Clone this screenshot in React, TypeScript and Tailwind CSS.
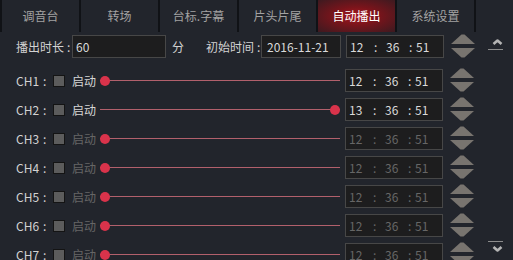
import React from 'react';

const TABS = ['调音台', '转场', '台标.字幕', '片头片尾', '自动播出', '系统设置'];
const ACTIVE = 4;

type Channel = { name: string; enabled: boolean; value: number; hour: string };

const CHANNELS: Channel[] = [
  { name: 'CH1', enabled: true, value: 0, hour: '12' },
  { name: 'CH2', enabled: true, value: 1, hour: '13' },
  { name: 'CH3', enabled: false, value: 0, hour: '12' },
  { name: 'CH4', enabled: false, value: 0, hour: '12' },
  { name: 'CH5', enabled: false, value: 0, hour: '12' },
  { name: 'CH6', enabled: false, value: 0, hour: '12' },
  { name: 'CH7', enabled: false, value: 0, hour: '12' },
];

// ── Spinner (up / down triangles) ────────────────────────────────────────────
function Spinner() {
  return (
    <svg width="24" height="24" viewBox="0 0 24 24" className="ml-[7px] shrink-0 -mt-[1px]">
      <polygon points="10.5,0.5 13.5,0.5 24,10 0,10" fill="#78746f" />
      <polygon points="0,14 24,14 13.5,23.5 10.5,23.5" fill="#78746f" />
    </svg>
  );
}

function TimeBox({ hour, dim }: { hour: string; dim?: boolean }) {
  return (
    <div
      className={`ml-[5px] flex h-[23px] w-[98px] shrink-0 items-center border border-[#474747] bg-[#1d1d1e] pl-[3px] ${
        dim ? 'text-[#666666]' : 'text-[#dadada]'
      }`}
    >
      <span className="w-[24px]">{hour}</span>
      <span className="w-[12px]">:</span>
      <span className="w-[23px]">36</span>
      <span className="w-[7px]">:</span>
      <span>51</span>
    </div>
  );
}

function ScrollArrow({ down }: { down?: boolean }) {
  return (
    <svg width="11" height="6" viewBox="0 0 11 6" className="ml-[4px]">
      <polyline
        points={down ? '1.5,1 5.5,4.5 9.5,1' : '1.5,5 5.5,1.5 9.5,5'}
        fill="none"
        stroke="#b4b4b4"
        strokeWidth="2.6"
        strokeLinejoin="round"
      />
    </svg>
  );
}

export default function App() {
  return (
    <div className="flex h-[260px] w-[513px] flex-col overflow-hidden bg-[#22252c] font-['Noto_Sans_CJK_SC','Noto_Sans',sans-serif] text-[12px] text-[#d2d2d2]">
      {/* Tab bar */}
      <div className="flex h-[32px] shrink-0 border-l-2 border-[#101216]">
        {TABS.map((t, i) => (
          <div
            key={t}
            className={`flex w-[79px] items-center justify-center border-r-2 border-[#101216] pb-[1px] ${
              i === ACTIVE
                ? 'bg-[radial-gradient(ellipse_at_center,#a8161f_0%,#7a141b_40%,#3c1a20_100%)] text-white'
                : 'text-[#a2a2a2]'
            }`}
          >
            {t}
          </div>
        ))}
      </div>

      <div className="flex min-h-0 flex-1">
        {/* Main panel */}
        <div className="flex w-[486px] shrink-0 flex-col pl-[16px]">
          <div className="mt-[3px] flex h-[23px] items-center">
            <span className="w-[56px] whitespace-nowrap">
              播出时长<span className="ml-[3px]">:</span>
            </span>
            <div className="flex h-[23px] w-[94px] items-center border border-[#474747] bg-[#1d1d1e] pl-[3px] text-[#dadada]">
              60
            </div>
            <span className="ml-[6px]">分</span>
            <span className="ml-[22px] w-[55px] whitespace-nowrap">
              初始时间<span className="ml-[3px]">:</span>
            </span>
            <div className="flex h-[23px] w-[80px] items-center border border-[#474747] bg-[#1d1d1e] pl-[5px] text-[#dadada]">
              2016-11-21
            </div>
            <TimeBox hour="12" />
            <Spinner />
          </div>

          <div className="mt-[11px] flex flex-col gap-[6px]">
            {CHANNELS.map((c) => (
              <div key={c.name} className="flex h-[23px] shrink-0 items-center">
                <span className="w-[37px] whitespace-nowrap">
                  {c.name}
                  <span className="ml-[4px]">:</span>
                </span>
                <span className="h-[12px] w-[12px] shrink-0 border border-[#141414] bg-[#5c5c5c]" />
                <span className={`ml-[7px] w-[28px] ${c.enabled ? 'text-[#d6d6d6]' : 'text-[#666666]'}`}>启动</span>
                <div className="relative flex h-[10px] w-[240px] shrink-0 items-center">
                  <div className="h-px w-full bg-[#b2606c]" />
                  <span
                    className={`absolute top-0 h-[10px] w-[10px] rounded-full bg-[#d9334b] ${
                      c.value ? 'right-0' : 'left-0'
                    }`}
                  />
                </div>
                <TimeBox hour={c.hour} dim={!c.enabled} />
                <Spinner />
              </div>
            ))}
          </div>
        </div>

        {/* Scrollbar */}
        <div className="flex flex-1 flex-col justify-between pb-[8px] pl-[2px] pt-[7px]">
          <div className="flex flex-col">
            <ScrollArrow />
            <div className="mt-[4px] h-px w-[15px] bg-[#8c8c8c]" />
          </div>
          <div className="flex flex-col">
            <div className="mb-[4px] h-px w-[15px] bg-[#8c8c8c]" />
            <ScrollArrow down />
          </div>
        </div>
      </div>
    </div>
  );
}
